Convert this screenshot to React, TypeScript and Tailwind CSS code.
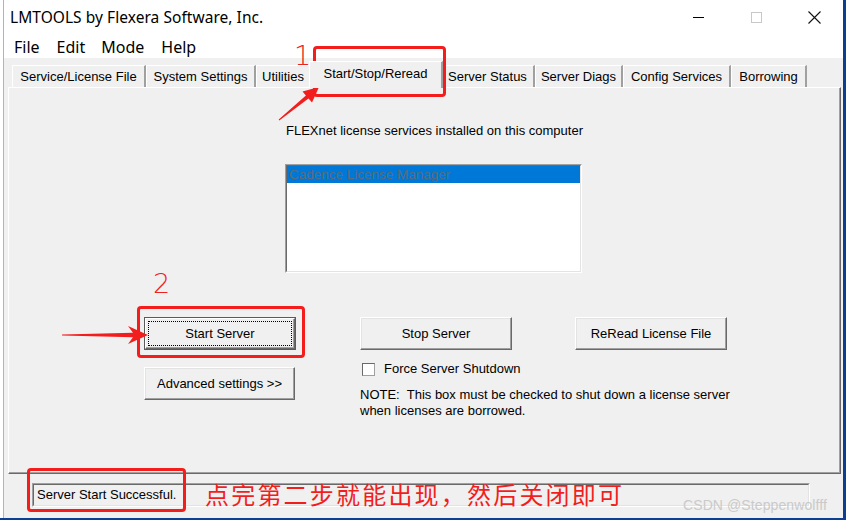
import React from "react";

function Tab({ label, w, active }: { label: string; w: number; active?: boolean }) {
  if (active) {
    return (
      <div
        className="relative z-10 -mx-[2px] mb-[-1px] h-[27px] flex items-center justify-center bg-[#f0f0f0] border-t border-l border-t-white border-l-white border-r-2 border-r-[#a0a0a0] text-[13px] text-black"
        style={{ width: w + 4 }}
      >
        <span className="-mt-[3px]">{label}</span>
      </div>
    );
  }
  return (
    <div
      className="h-[22px] flex items-center justify-center bg-[#f0f0f0] border-t border-l border-t-white border-l-white border-r-2 border-r-[#a0a0a0] text-[13px] text-black"
      style={{ width: w }}
    >
      <span className="mt-[1px]">{label}</span>
    </div>
  );
}

function Btn({ label, w, def }: { label: string; w: number; def?: boolean }) {
  if (def) {
    return (
      <div className="h-[33px] border border-[#5a5a5a] bg-[#f0f0f0]" style={{ width: w }}>
        <div className="h-full w-full border border-t-white border-l-white border-r-[#696969] border-b-[#696969] shadow-[inset_-1px_-1px_0_#a0a0a0] p-[2px]">
          <div className="h-full w-full border border-dotted border-black flex items-center justify-center text-[13px] text-black">
            {label}
          </div>
        </div>
      </div>
    );
  }
  return (
    <div
      className="h-[33px] flex items-center justify-center bg-[#f0f0f0] border border-t-white border-l-white border-r-[#696969] border-b-[#696969] shadow-[inset_-1px_-1px_0_#a0a0a0,inset_1px_1px_0_#e3e3e3] text-[13px] text-black"
      style={{ width: w }}
    >
      {label}
    </div>
  );
}

export default function App() {
  return (
    <div className="relative w-[846px] h-[520px] flex bg-[#0c3f94] overflow-hidden font-['Liberation_Sans',Arial,sans-serif]">
      {/* window */}
      <div className="w-[843px] h-[518px] flex bg-white">
        <div className="w-[3px] bg-white" />
        <div className="flex-1 flex flex-col border-l border-[#b4b4b4] bg-[#f0f0f0]">
          {/* title bar */}
          <div className="h-[35px] bg-white flex items-center justify-between">
            <span className="pl-[6px] text-[15.5px] text-black font-['Noto_Sans',sans-serif] tracking-[0.05px]">
              LMTOOLS by Flexera Software, Inc.
            </span>
            <div className="flex items-center h-full">
              <div className="w-[58px] h-full flex items-center justify-center">
                <div className="w-[11px] h-px bg-black" />
              </div>
              <div className="w-[58px] h-full flex items-center justify-center">
                <div className="w-[11px] h-[11px] border border-[#c8c8c8]" />
              </div>
              <div className="w-[58px] h-full flex items-center justify-center">
                <svg width="13" height="13" viewBox="0 0 13 13">
                  <path d="M0.5 0.5 L12.5 12.5 M12.5 0.5 L0.5 12.5" stroke="#111" strokeWidth="1.1" />
                </svg>
              </div>
            </div>
          </div>
          {/* menu bar */}
          <div className="h-[23px] bg-white flex items-center pl-[10px] text-[16px] text-black font-['Noto_Sans',sans-serif]">
            <span>File</span>
            <span className="ml-[17px]">Edit</span>
            <span className="ml-[16px]">Mode</span>
            <span className="ml-[17px]">Help</span>
          </div>
          {/* tabs */}
          <div className="mt-[3px] h-[26px] flex items-end pl-[8px]">
            <Tab label="Service/License File" w={134} />
            <Tab label="System Settings" w={110} />
            <Tab label="Utilities" w={55} />
            <Tab label="Start/Stop/Reread" w={130} active />
            <Tab label="Server Status" w={94} />
            <Tab label="Server Diags" w={88} />
            <Tab label="Config Services" w={108} />
            <Tab label="Borrowing" w={76} />
          </div>
          {/* panel */}
          <div className="ml-[4px] w-[833px] h-[387px] border border-t-white border-l-white border-r-[#696969] border-b-[#696969] shadow-[inset_-1px_-1px_0_#a0a0a0] flex flex-col">
            <div className="ml-[276px] mt-[35px] flex flex-col">
              <div className="ml-[1px] h-[16px] leading-[16px] text-[13px] text-black">
                FLEXnet license services installed on this computer
              </div>
              <div className="mt-[25px] w-[297px] h-[109px] bg-white border border-t-[#a0a0a0] border-l-[#a0a0a0] border-r-white border-b-white">
                <div className="h-full w-full border border-t-[#696969] border-l-[#696969] border-r-[#e3e3e3] border-b-[#e3e3e3]">
                  <div className="h-[17px] bg-[#0078d7] pl-[2px] text-[13.5px] leading-[17px] text-[#5c6b7a]">
                    Cadence License Manager
                  </div>
                </div>
              </div>
            </div>
            <div className="mt-[44px] ml-[135px] flex">
              <div className="flex flex-col gap-[17px]">
                <Btn label="Start Server" w={152} def />
                <Btn label="Advanced settings >>" w={151} />
              </div>
              <div className="ml-[64px] flex flex-col">
                <div className="flex gap-[63px]">
                  <Btn label="Stop Server" w={152} />
                  <Btn label="ReRead License File" w={152} />
                </div>
                <div className="mt-[11px] flex items-center">
                  <div className="ml-[2px] w-[13px] h-[13px] bg-white border border-t-[#696969] border-l-[#696969] border-r-[#a0a0a0] border-b-[#a0a0a0]" />
                  <span className="ml-[9px] text-[13px] leading-[16px] text-black">Force Server Shutdown</span>
                </div>
                <div className="mt-[10px] text-[13px] leading-[16px] text-black">
                  <div>NOTE:&nbsp; This box must be checked to shut down a license server</div>
                  <div>when licenses are borrowed.</div>
                </div>
              </div>
            </div>
          </div>
          {/* status bar */}
          <div className="mt-[9px] ml-[28px] w-[778px] h-[24px] border border-t-[#a0a0a0] border-l-[#a0a0a0] border-r-white border-b-white">
            <div className="h-full w-full border border-t-[#696969] border-l-[#696969] border-r-[#e3e3e3] border-b-[#e3e3e3] flex items-center pl-[3px] text-[13px] text-black">
              Server Start Successful.
            </div>
          </div>
        </div>
      </div>
      <div className="flex-1 bg-[#0c3f94]" />

      {/* annotations overlay */}
      <div className="absolute left-[313px] top-[46px] w-[133px] h-[51px] border-[3px] border-[#f51c1c] rounded-[4px]" />
      <div className="absolute left-[137px] top-[306px] w-[168px] h-[52px] border-[3px] border-[#f51c1c] rounded-[4px]" />
      <div className="absolute left-[27px] top-[468px] w-[159px] h-[44px] border-[3px] border-[#f51c1c] rounded-[4px]" />
      <div className="absolute left-[294px] top-[40px] text-[27px] leading-[32px] text-[#ec2222] font-['DejaVu_Sans',sans-serif] font-light">1</div>
      <div className="absolute left-[153px] top-[268px] text-[27px] leading-[32px] text-[#ec2222] font-['DejaVu_Sans',sans-serif] font-light">2</div>
      <div className="absolute left-[205px] top-[478px] text-[24px] leading-[32px] tracking-[2.2px] text-[#f21e1e] font-['Noto_Sans_CJK_SC',sans-serif]">
        点完第二步就能出现，然后关闭即可
      </div>
      <div className="absolute left-[683px] top-[496px] text-[14px] leading-[18px] text-[#cacaca] font-['Liberation_Sans',sans-serif] tracking-[0.1px]">
        CSDN @Steppenwolfff
      </div>
      <svg className="absolute left-0 top-0 pointer-events-none" width="846" height="520" viewBox="0 0 846 520">
        <polygon
          points="279.3,120.6 308.5,98.4 312,102.5 319,87 302.5,91.5 305.9,95.4 278.7,119.4"
          fill="#f21e1e"
        />
        <polygon points="62,334.6 133,332.8 128,326 148,335 128,344 133,337.2 62,335.4" fill="#f21e1e" />
      </svg>
    </div>
  );
}
